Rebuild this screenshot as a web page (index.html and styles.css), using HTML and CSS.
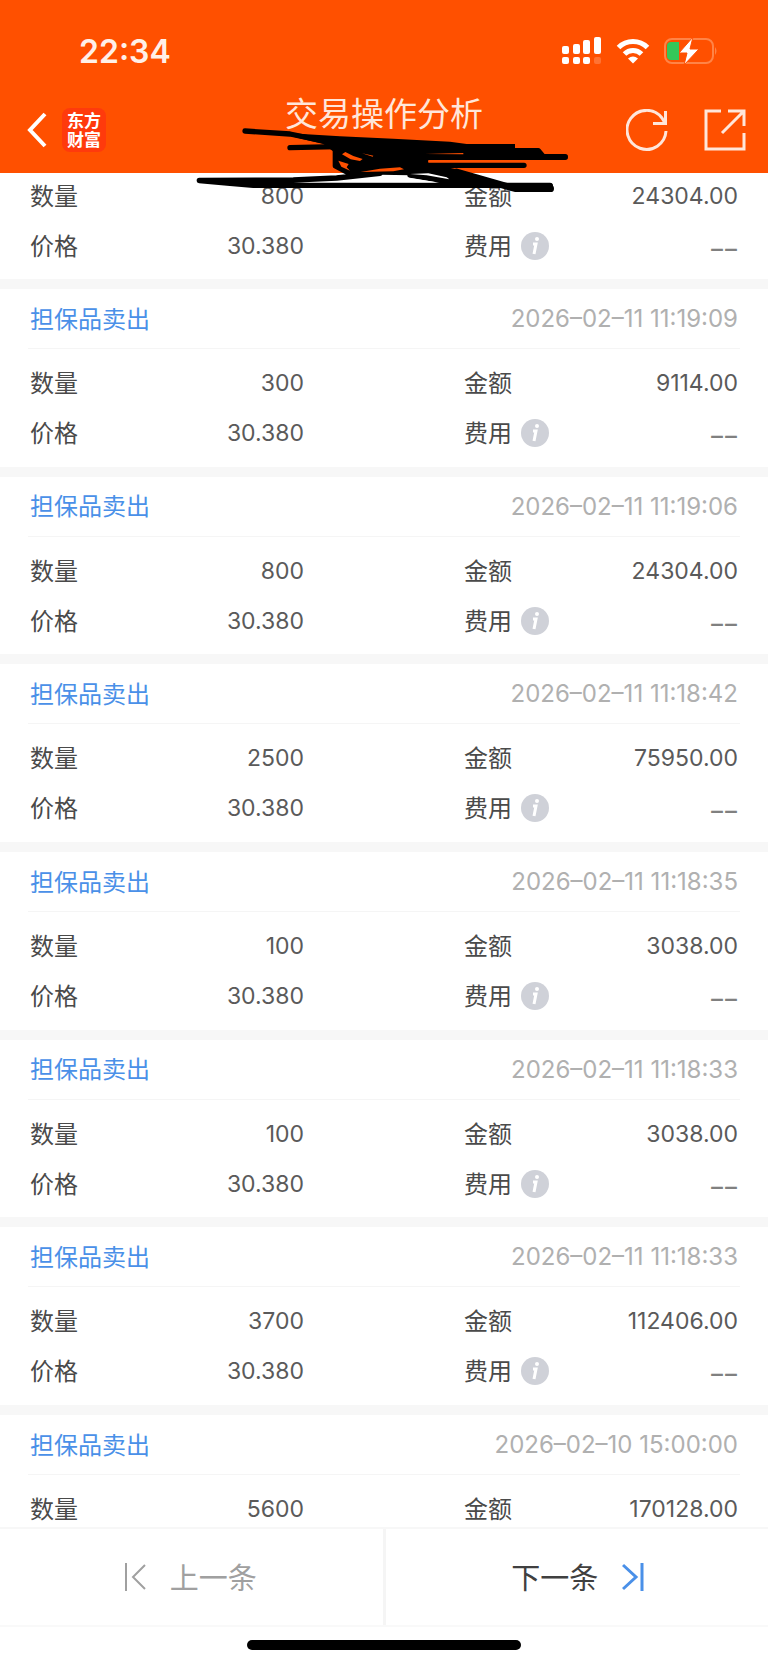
FILE: index.html
```html
<!DOCTYPE html>
<html lang="zh-CN">
<head>
    <meta charset="UTF-8">
    <meta name="viewport" content="width=device-width, initial-scale=1.0">
    <title>交易操作分析</title>
    <link rel="stylesheet" href="styles.css">
</head>
<body>
    <header class="header">
        <div class="status-bar">
            <span class="clock">22:34</span>
            <div class="status-icons">
                <svg width="40" height="28" viewBox="0 0 40 28" fill="#fff">
                    <rect x="0" y="9" width="7" height="8" rx="2"/>
                    <rect x="11" y="7" width="7" height="10" rx="2"/>
                    <rect x="21" y="3" width="7" height="14" rx="2"/>
                    <rect x="32" y="0" width="7" height="17" rx="2"/>
                    <rect x="0" y="20" width="7" height="7" rx="2"/>
                    <rect x="11" y="20" width="7" height="7" rx="2"/>
                    <rect x="21" y="20" width="7" height="7" rx="2"/>
                    <rect x="32" y="20" width="7" height="7" rx="2" opacity="0.2"/>
                </svg>
                <svg width="34" height="26" viewBox="0 0 34 26" fill="none" stroke="#fff" stroke-width="5">
                    <path d="M2.5 9.5a20.5 20.5 0 0 1 29 0"/>
                    <path d="M8.5 16a12 12 0 0 1 17 0"/>
                    <path d="M12 20.5q5-4 10 0l-5 5z" fill="#fff" stroke="none"/>
                </svg>
                <svg width="54" height="28" viewBox="0 0 54 28" fill="none">
                    <rect x="1" y="2" width="48" height="24" rx="7" stroke="#ff8447" stroke-width="2"/>
                    <path d="M51 10q3 4 0 8z" fill="#ff8447"/>
                    <path d="M7 5h8v18H7q-4 0-4-4V9q0-4 4-4z" fill="#34c759"/>
                    <path d="M29 0L15 16h8l-3 12 15-16h-9l3-12z" fill="#fff" stroke="#ff5000" stroke-width="1"/>
                </svg>
            </div>
        </div>
        <nav class="nav">
            <div class="nav-side">
                <button class="icon-btn" aria-label="返回">
                    <svg width="20" height="36" viewBox="0 0 20 36" fill="none" stroke="#fff" stroke-width="4"><path d="M18 2L3 18l15 16"/></svg>
                </button>
                <div class="logo">东方<br>财富</div>
            </div>
            <h1 class="title">交易操作分析</h1>
            <div class="nav-side nav-right">
                <button class="icon-btn" aria-label="刷新">
                    <svg width="42" height="42" viewBox="0 0 42 42" fill="none" stroke="#ffe6da" stroke-width="3"><path d="M40 22A19.5 19.5 0 1 1 36 9l3 5M27 14.5h12.5V2"/></svg>
                </button>
                <button class="icon-btn" aria-label="分享">
                    <svg width="42" height="42" viewBox="0 0 42 42" fill="none" stroke="#ffe6da" stroke-width="3"><path d="M17 2H2v38h38V24M24 2h16v15M40 2L18 24"/></svg>
                </button>
            </div>
        </nav>
        <svg class="scribble" width="400" height="120" viewBox="0 0 1200 360" fill="none" stroke="#000" stroke-width="16" stroke-linecap="round" stroke-linejoin="round">
            <path d="M195 123L330 132 455 158M330 173L470 170M850 182H1075L1090 200H1156M700 202H1156M600 226H1032"/>
            <path d="M195 120L330 130 480 139 640 146 810 155 860 162H1005V174L1075 180 1088 200 900 204 745 206 745 220 830 238 1000 286H860L780 278 690 256 600 254 530 256 495 248 462 228V186L430 162 330 138z" fill="#000" stroke="none"/>
            <path d="M466 184V228L500 246 560 252M58 271L340 270 470 264 600 250M58 272L150 280 220 286H1110M690 256L780 270 850 285"/>
            <path d="M830 246L1005 296H1112" stroke-width="20"/>
            <path d="M990 288H1110" stroke-width="18"/>
            <g fill="#ff5000" stroke="none">
                <path d="M486 193L496 186 520 198 548 207 540 213 512 208z"/>
                <path d="M475 212L506 222 500 232 510 242 484 230z"/>
                <path d="M542 246L600 236 660 232 672 238 640 244z"/>
                <path d="M546 190L578 200 580 197z"/>
                <path d="M735 192L850 189V193z"/>
                <path d="M745 212L860 211V216H745z"/>
            </g>
            <path d="M690 252L745 250 800 262 808 268 740 256z" fill="#fff" stroke="none"/>
            <path d="M480 276L600 262 680 262 770 277z" fill="#fff" stroke="none"/>
        </svg>
    </header>

    <main class="list" id="list"></main>

    <footer class="footer">
        <div class="pager">
            <button class="pager-btn prev">
                <svg width="22" height="30" viewBox="0 0 22 30" fill="none" stroke="currentColor" stroke-width="2"><path d="M2 1v28M21 3L9 15l12 12"/></svg>
                <span class="cjk">上一条</span>
            </button>
            <button class="pager-btn next">
                <span class="cjk">下一条</span>
                <svg width="22" height="30" viewBox="0 0 22 30" fill="none" stroke="#4a90e8" stroke-width="3"><path d="M20 1v28M1 3l13 12L1 27"/></svg>
            </button>
        </div>
        <div class="home-bar"></div>
    </footer>

    <script src="script.js"></script>
</body>
</html>
```
FILE: styles.css
```css
* {
    box-sizing: border-box;
}
body {
    margin: 0;
    height: 100vh;
    display: flex;
    flex-direction: column;
    overflow: hidden;
    background-color: #fff;
    color: #4a4a4a;
    font-family: Inter, "Noto Sans CJK SC", sans-serif;
    font-size: 24px;
}
button {
    padding: 0;
    border: none;
    background: none;
    color: inherit;
    font: inherit;
    cursor: pointer;
}
svg {
    display: block;
}
/* lifts Chinese labels to the optical middle of their row */
.cjk {
    padding-bottom: 3px;
}

/* Header */
.header {
    position: relative;
    z-index: 1;
    flex: none;
    margin-bottom: -2px;
    padding-bottom: 20px;
    background-color: #ff5000;
    color: #fff;
}
.status-bar {
    display: flex;
    justify-content: space-between;
    align-items: center;
    height: 88px;
    padding: 14px 50px 0 79px;
}
.clock {
    font-size: 32px;
    font-weight: 600;
    color: #fff0e8;
}
.status-icons {
    display: flex;
    align-items: center;
    gap: 14px;
}
.nav {
    display: flex;
    justify-content: space-between;
    height: 65px;
    padding: 0 22px;
}
.nav-side {
    flex: 1;
    display: flex;
    align-items: center;
    gap: 15px;
    padding-top: 19px;
    padding-left: 5px;
}
.nav-right {
    justify-content: flex-end;
    gap: 36px;
}
.logo {
    width: 44px;
    height: 44px;
    padding-top: 2px;
    border-radius: 8px;
    background-color: #ff3a0c;
    font-family: "Noto Sans CJK SC", sans-serif;
    font-size: 17px;
    font-weight: 700;
    line-height: 19px;
    text-align: center;
}
.title {
    margin: 0;
    color: #ffe6da;
    font-size: 33px;
    font-weight: 400;
    line-height: 52px;
}
.scribble {
    position: absolute;
    top: 90px;
    left: calc(50% - 204px);
}

/* Trades */
.list {
    flex: 1;
    display: grid;
    grid-template-rows: auto repeat(6, 1fr) auto;
}
.trade {
    padding-bottom: 8px;
}
.trade:last-child {
    padding-bottom: 0;
}
.trade.full {
    border-top: 10px solid #f7f7f7;
}
.trade-head {
    display: flex;
    justify-content: space-between;
    align-items: center;
    height: 60px;
    margin: 0 28px 9px;
    padding: 0 2px;
    border-bottom: 1px solid #f5f5f5;
}
.type {
    margin: 0;
    color: #4a90e8;
    font-size: 24px;
    font-weight: 400;
}
.time {
    color: #b0b0b0;
}
.fields {
    display: grid;
    grid-template-columns: 1fr 1fr;
    column-gap: 160px;
    margin: 0 30px;
}
.field {
    display: flex;
    justify-content: space-between;
    align-items: center;
    height: 50px;
}
.field dt {
    display: flex;
    align-items: center;
    gap: 9px;
}
.field dd {
    margin: 0;
    color: #5a5a5a;
    font-size: 23px;
}
.field .empty {
    color: #808080;
    font-family: "Noto Sans", sans-serif;
    font-size: 28px;
}

/* Footer */
.footer {
    position: relative;
    z-index: 1;
    flex: none;
    margin-top: -7px;
    background-color: #fff;
}
.pager {
    display: flex;
    height: 100px;
    border-top: 2px solid #f7f7f7;
    border-bottom: 2px solid #f9f9f9;
}
.pager-btn {
    flex: 1;
    display: flex;
    align-items: center;
    justify-content: center;
    gap: 24px;
    font-size: 29px;
}
.prev {
    padding-right: 2px;
    border-right: 3px solid #f5f5f5;
    color: #a0a0a0;
}
.next {
    padding-left: 2px;
    color: #404040;
}
.home-bar {
    width: 274px;
    height: 10px;
    margin: 13px auto 18px;
    border-radius: 5px;
    background-color: #000;
}
```
FILE: script.js
```js
const trades = [
    { amount: '800', total: '24304.00' },
    { time: '2026–02–11 11:19:09', amount: '300', total: '9114.00' },
    { time: '2026–02–11 11:19:06', amount: '800', total: '24304.00' },
    { time: '2026–02–11 11:18:42', amount: '2500', total: '75950.00' },
    { time: '2026–02–11 11:18:35', amount: '100', total: '3038.00' },
    { time: '2026–02–11 11:18:33', amount: '100', total: '3038.00' },
    { time: '2026–02–11 11:18:33', amount: '3700', total: '112406.00' },
    { time: '2026–02–10 15:00:00', amount: '5600', total: '170128.00', last: true }
];

const infoIcon = `<button class="icon-btn" aria-label="费用说明">
    <svg width="28" height="28" viewBox="0 0 28 28"><circle cx="14" cy="14" r="14" fill="#cfd1d8"/><circle cx="16" cy="7" r="2" fill="#fff"/><path d="M12 12h3l-2 10" fill="none" stroke="#fff" stroke-width="3"/></svg>
</button>`;

const field = (label, value, icon = '') =>
    `<div class="field"><dt><span class="cjk">${label}</span>${icon}</dt><dd class="${icon ? 'empty' : ''}">${value}</dd></div>`;

document.getElementById('list').innerHTML = trades.map((t) => `
    <article class="trade ${t.time ? 'full' : ''}">
        ${t.time ? `<div class="trade-head"><h2 class="type cjk">担保品卖出</h2><time class="time">${t.time}</time></div>` : ''}
        <dl class="fields">
            ${field('数量', t.amount)}
            ${field('金额', t.total)}
            ${t.last ? '' : field('价格', '30.380') + field('费用', '––', infoIcon)}
        </dl>
    </article>`).join('');
```
